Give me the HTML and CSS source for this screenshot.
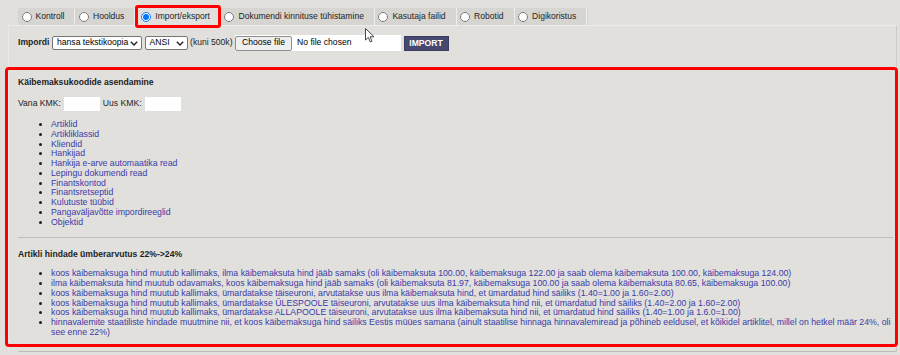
FILE: index.html
```html
<!DOCTYPE html>
<html lang="et">
<head>
<meta charset="utf-8">
<title>Import/eksport</title>
<link rel="stylesheet" href="styles.css">
</head>
<body>
<div class="tabs">
  <label class="tab"><input type="radio" name="t"><span>Kontroll</span></label>
  <label class="tab"><input type="radio" name="t"><span>Hooldus</span></label>
  <label class="tab active"><input type="radio" name="t" checked><span>Import/eksport</span></label>
  <label class="tab"><input type="radio" name="t"><span>Dokumendi kinnituse tühistamine</span></label>
  <label class="tab"><input type="radio" name="t"><span>Kasutaja failid</span></label>
  <label class="tab"><input type="radio" name="t"><span>Robotid</span></label>
  <label class="tab"><input type="radio" name="t"><span>Digikoristus</span></label>
</div>
<div class="panel">
  <div class="import-row">
    <b>Impordi</b>
    <span class="select sel-wide">hansa tekstikoopia<svg class="chev" width="8" height="5" viewBox="0 0 8 5"><path d="M0.8 0.8 L4 4 L7.2 0.8" fill="none" stroke="#222" stroke-width="1.4"/></svg></span>
    <span class="select sel-narrow">ANSI<svg class="chev" width="8" height="5" viewBox="0 0 8 5"><path d="M0.8 0.8 L4 4 L7.2 0.8" fill="none" stroke="#222" stroke-width="1.4"/></svg></span>
    <span>(kuni 500k)</span>
    <span class="file"><span class="file-btn">Choose file</span><span class="file-name">No file chosen</span></span>
    <button class="import-btn">IMPORT</button>
  </div>
  <div class="highlight">
    <h3 class="title">Käibemaksukoodide asendamine</h3>
    <div class="kmk-row">
      <span>Vana KMK:</span><input class="kmk" type="text">
      <span>Uus KMK:</span><input class="kmk" type="text">
    </div>
    <ul class="list">
      <li><a href="#">Artiklid</a></li>
      <li><a href="#">Artikliklassid</a></li>
      <li><a href="#">Kliendid</a></li>
      <li><a href="#">Hankijad</a></li>
      <li><a href="#">Hankija e-arve automaatika read</a></li>
      <li><a href="#">Lepingu dokumendi read</a></li>
      <li><a href="#">Finantskontod</a></li>
      <li><a href="#">Finantsretseptid</a></li>
      <li><a href="#">Kulutuste tüübid</a></li>
      <li><a href="#">Pangaväljavõtte impordireeglid</a></li>
      <li><a href="#">Objektid</a></li>
    </ul>
    <hr class="sep">
    <h3 class="title title2">Artikli hindade ümberarvutus 22%-&gt;24%</h3>
    <ul class="list list2">
      <li><a href="#">koos käibemaksuga hind muutub kallimaks, ilma käibemaksuta hind jääb samaks (oli käibemaksuta 100.00, käibemaksuga 122.00 ja saab olema käibemaksuta 100.00, käibemaksuga 124.00)</a></li>
      <li><a href="#">ilma käibemaksuta hind muutub odavamaks, koos käibemaksuga hind jääb samaks (oli käibemaksuta 81.97, käibemaksuga 100.00 ja saab olema käibemaksuta 80.65, käibemaksuga 100.00)</a></li>
      <li><a href="#">koos käibemaksuga hind muutub kallimaks, ümardatakse täiseuroni, arvutatakse uus ilma käibemaksuta hind, et ümardatud hind säiliks (1.40=1.00 ja 1.60=2.00)</a></li>
      <li><a href="#">koos käibemaksuga hind muutub kallimaks, ümardatakse ÜLESPOOLE täiseuroni, arvutatakse uus ilma käibemaksuta hind nii, et ümardatud hind säiliks (1.40=2.00 ja 1.60=2.00)</a></li>
      <li><a href="#">koos käibemaksuga hind muutub kallimaks, ümardatakse ALLAPOOLE täiseuroni, arvutatakse uus ilma käibemaksuta hind nii, et ümardatud hind säiliks (1.40=1.00 ja 1.6.0=1.00)</a></li>
      <li><a href="#">hinnavalemite staatiliste hindade muutmine nii, et koos käibemaksuga hind säiliks Eestis müües samana (ainult staatilise hinnaga hinnavalemiread ja põhineb eeldusel, et kõikidel artiklitel, millel on hetkel määr 24%, oli see enne 22%)</a></li>
    </ul>
  </div>
  <hr class="sep sep-bottom">
</div>
<svg class="cursor" width="11" height="15" viewBox="0 0 11 15"><path d="M0.5 0.5 L0.5 12 L3.3 9.4 L5.3 14 L7 13.2 L5.1 8.8 L9 8.8 Z" fill="#fff" stroke="#333" stroke-width="0.9" stroke-linejoin="round"/></svg>
</body>
</html>
```
FILE: styles.css
```css
html, body {
  margin: 0;
  padding: 0;
}
body {
  background: #e1e0dc;
  font-family: "Liberation Sans", Arial, sans-serif;
  font-size: 8.6px;
  line-height: 9.75px;
  color: #1e1e1e;
  width: 900px;
  height: 355px;
  overflow: hidden;
}

/* Tabs */
.tabs {
  display: flex;
  margin: 8px 0 0 18px;
  height: 17px;
  width: 570px;
  background: #d6d5d1;
}
.tab {
  display: flex;
  align-items: center;
  padding: 0 10px 0 3.5px;
  border-right: 1px solid #eeeeec;
  white-space: nowrap;
  color: #1e1e1e;
  font-size: 8.55px;
}
.tab input {
  width: 10px;
  height: 10px;
  margin: 0 4px 0 0;
}
.tab.active {
  background: #e1e0dc;
  border: 3px solid #ff0000;
  border-radius: 3px;
  margin: -3px 0;
  padding: 0 8px 0 3px;
  position: relative;
  z-index: 2;
}

/* Panel */
.panel {
  margin-left: 8px;
  width: 889px;
  box-sizing: border-box;
  border-top: 1px solid #ececea;
  border-left: 1px solid #e8e8e6;
  border-right: 1px solid #cbcac6;
}
.import-row {
  display: flex;
  align-items: center;
  gap: 2.5px;
  padding: 9px 10px 0 9px;
  height: 16px;
  white-space: nowrap;
}
.select {
  display: flex;
  align-items: center;
  justify-content: space-between;
  box-sizing: border-box;
  height: 14px;
  padding: 0 3px 0 4px;
  border: 1px solid #767676;
  border-radius: 2px;
  background: #fff;
  color: #000;
}
.sel-wide { width: 90px; }
.sel-narrow { width: 43px; }
.chev {
  flex: none;
}
.file {
  display: flex;
  align-items: center;
  box-sizing: border-box;
  width: 166px;
  height: 16px;
  background: #fff;
  color: #000;
}
.file-btn {
  display: flex;
  align-items: center;
  box-sizing: border-box;
  height: 15px;
  padding: 0 6px;
  margin-right: 5px;
  border: 1px solid #8f8f8f;
  border-radius: 2px;
  background: #efefef;
}
.import-btn {
  width: 45px;
  height: 15px;
  margin-left: 0;
  padding: 0;
  border: 1px solid #3a3c62;
  background: #46486f;
  color: #fff;
  font-family: inherit;
  font-weight: bold;
  font-size: 8.6px;
}

/* Highlighted block */
.highlight {
  margin: 16px -2px 0 -4px;
  border: 3px solid #ff0000;
  border-radius: 4px;
  padding: 7px 0 6px 10px;
}
.title {
  margin: 0;
  font-size: 8.6px;
  line-height: 10px;
  font-weight: bold;
  color: #1e1e1e;
}
.kmk-row {
  display: flex;
  align-items: center;
  margin-top: 10px;
  height: 14px;
  gap: 3px;
}
.kmk {
  width: 36px;
  height: 14px;
  box-sizing: border-box;
  border: none;
  background: #fff;
  padding: 0;
  margin-right: 0;
}
.list {
  margin: 9px 0 0 0;
  padding: 0 0 0 33px;
  font-size: 8.75px;
}
.list li {
  line-height: 9.75px;
}
.list a {
  color: #3b3ba8;
  text-decoration: none;
}
.list2 {
  margin-top: 10px;
  padding-right: 4px;
}
.sep {
  border: 0;
  border-top: 1px solid #bebdba;
  margin: 10px 2px 0 0;
  height: 0;
}
.title2 {
  margin-top: 11px;
}
.sep-bottom {
  margin: 4px 0 0 9px;
}

/* Mouse pointer overlay */
.cursor {
  position: absolute;
  left: 365px;
  top: 28px;
}
```
